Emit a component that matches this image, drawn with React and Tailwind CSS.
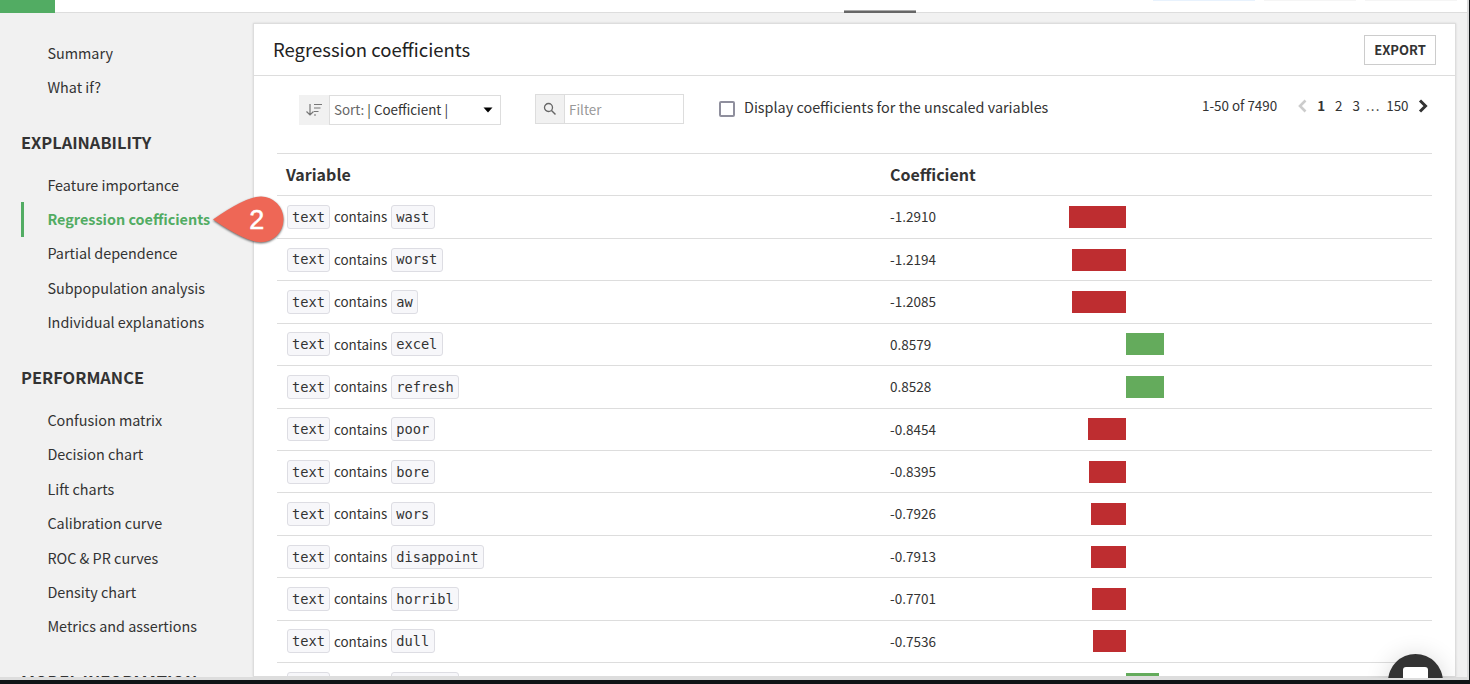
const rows = [
  ["wast", "-1.2910", -1.291],
  ["worst", "-1.2194", -1.2194],
  ["aw", "-1.2085", -1.2085],
  ["excel", "0.8579", 0.8579],
  ["refresh", "0.8528", 0.8528],
  ["poor", "-0.8454", -0.8454],
  ["bore", "-0.8395", -0.8395],
  ["wors", "-0.7926", -0.7926],
  ["disappoint", "-0.7913", -0.7913],
  ["horribl", "-0.7701", -0.7701],
  ["dull", "-0.7536", -0.7536],
  ["perfect", "0.7436", 0.7436],
];

const PX_PER_UNIT = 44.4;

function NavItem({ children, active }) {
  return (
    <div
      className={
        "flex h-[34.45px] shrink-0 items-center pb-[0.6px] pl-[23.4px] text-[14.4px] border-l-[3px] " +
        (active ? "border-[#52ac63] font-bold text-[#52ac63]" : "border-transparent")
      }
    >
      <span className="whitespace-nowrap">{children}</span>
    </div>
  );
}

function NavHeading({ children }) {
  return (
    <div className="flex h-[63px] shrink-0 items-center pt-[11px] text-[16.4px] font-bold">
      {children}
    </div>
  );
}

function Chip({ children }) {
  return (
    <span className="flex h-[24px] items-center rounded-[3px] border border-[#dddde3] bg-[#f7f7fa] px-[4.5px] pt-[1.5px] font-['DejaVu_Sans_Mono',monospace] text-[13.7px]">
      {children}
    </span>
  );
}

function Row({ word, text, value }) {
  const w = Math.abs(value) * PX_PER_UNIT;
  return (
    <div className="flex h-[42.44px] shrink-0 items-center border-b border-[#dddddd] pl-[9px] text-[13.5px]">
      <div className="flex w-[604px] items-center gap-[3.5px] pl-[0.5px]">
        <Chip>text</Chip>
        <span className="text-[13.4px]">contains</span>
        <Chip>{word}</Chip>
      </div>
      <div className="w-[148px]">{text}</div>
      <div className="grid w-[176px] grid-cols-2">
        <div className="flex justify-end">
          {value < 0 && <div className="h-[22px] bg-[#be2d30]" style={{ width: w }} />}
        </div>
        <div>{value > 0 && <div className="h-[22px] bg-[#64ab5c]" style={{ width: w }} />}</div>
      </div>
    </div>
  );
}

export default function App() {
  return (
    <div className="relative flex h-[684px] w-[1470px] flex-col overflow-hidden bg-[#101416] font-['Noto_Sans_CJK_SC',sans-serif] leading-none text-[#333333]">
      <div className="flex h-[680px] w-[1469px] flex-col border-r-2 border-b-[3px] border-[#dddddd] bg-[#f1f1f1]">
        <header className="flex h-[13px] shrink-0 border-b border-[#dddddd] bg-white">
          <div className="h-[13px] w-[55px] bg-[#52ac63]" />
          <div className="ml-[789px] mt-[10px] h-[3px] w-[72px] border-t border-[#aaaaaa] bg-[#666666]" />
          <div className="ml-[237px] h-px w-[102px] bg-[#e8f2fd]" />
          <div className="ml-[9px] h-px w-[92px] bg-[#f5f5f5]" />
          <div className="ml-[9px] h-px w-[92px] bg-[#f5f5f5]" />
        </header>
        <div className="flex min-h-0 flex-1 overflow-hidden">
          <nav className="flex w-[253px] shrink-0 flex-col pl-[21px] pt-[23px]">
            <NavItem>Summary</NavItem>
            <NavItem>What if?</NavItem>
            <NavHeading>EXPLAINABILITY</NavHeading>
            <NavItem>Feature importance</NavItem>
            <NavItem active>Regression coefficients</NavItem>
            <NavItem>Partial dependence</NavItem>
            <NavItem>Subpopulation analysis</NavItem>
            <NavItem>Individual explanations</NavItem>
            <NavHeading>PERFORMANCE</NavHeading>
            <NavItem>Confusion matrix</NavItem>
            <NavItem>Decision chart</NavItem>
            <NavItem>Lift charts</NavItem>
            <NavItem>Calibration curve</NavItem>
            <NavItem>ROC &amp; PR curves</NavItem>
            <NavItem>Density chart</NavItem>
            <NavItem>Metrics and assertions</NavItem>
            <NavHeading>MODEL INFORMATION</NavHeading>
          </nav>
          <main className="mt-[10px] flex w-[1203px] shrink-0 flex-col border border-[#dddddd] bg-white shadow-[0_0_2px_rgba(0,0,0,0.12)]">
            <div className="flex h-[52px] shrink-0 items-center justify-between border-b border-[#dddddd] pl-[19px] pr-[19px]">
              <h1 className="pb-[0.5px] text-[18.5px] text-[#222222]">Regression coefficients</h1>
              <button className="h-[30px] w-[72px] border border-[#cccccc] text-[13px] font-bold">EXPORT</button>
            </div>
            <div className="flex h-[77px] shrink-0 items-start pl-[45px] pr-[26px] pt-[18px] text-[13.4px]">
              <div className="mt-px flex h-[30px]">
                <div className="flex w-[30px] items-center justify-center bg-[#f1f1f1]">
                  <svg width="18" height="16" viewBox="0 0 18 16" fill="none" stroke="#777777" strokeWidth="1.2">
                    <path d="M5 2v10.500M1.500 9.500L5 13l3.500-3.500M9 2.500h8M9 6h6.500M9 9.500h4.500M9 13h2" />
                  </svg>
                </div>
                <div className="flex w-[172px] items-center justify-between border border-[#dddddd] pl-[4px] pr-[7px]">
                  <span className="whitespace-pre"><span className="text-[#666666]">Sort:</span> | Coefficient |</span>
                  <svg width="10" height="6" viewBox="0 0 10 6"><path d="M0.500 0.500h9L5 5.500z" fill="#000000" /></svg>
                </div>
              </div>
              <div className="ml-[34px] flex h-[30px] w-[149px] border border-[#dddddd]">
                <div className="flex w-[29px] items-center justify-center border-r border-[#dddddd] bg-[#f1f1f1]">
                  <svg width="14" height="14" viewBox="0 0 14 14" fill="none" stroke="#666666">
                    <circle cx="5.500" cy="5.500" r="4" strokeWidth="1.300" />
                    <path d="M8.500 8.500L12.500 12.500" strokeWidth="1.500" />
                  </svg>
                </div>
                <span className="flex items-center pl-[4px] pt-px text-[#999999]">Filter</span>
              </div>
              <div className="ml-[35px] mt-[7px] h-[16px] w-[16px] rounded-[2px] border-2 border-[#8f8f9d]" />
              <span className="ml-[9px] mt-[6px] text-[14.4px]">Display coefficients for the unscaled variables</span>
              <div className="ml-auto mt-[5px] flex items-center">
                <span className="mr-[21px]">1-50 of 7490</span>
                <svg className="mr-[10px]" width="9" height="14" viewBox="0 0 9 14" fill="none" stroke="#cccccc" strokeWidth="2.600"><path d="M7.500 1.500L2 7l5.500 5.500" /></svg>
                <span className="mr-[10px] font-bold">1</span>
                <span className="mr-[10px]">2</span>
                <span className="mr-[6px]">3</span>
                <span className="mr-[5.500px] tracking-[1.2px]">...</span>
                <span className="mr-[9.500px]">150</span>
                <svg className="mr-px" width="10" height="14" viewBox="0 0 10 14" fill="none" stroke="#333333" strokeWidth="3"><path d="M2 1.500L7.500 7L2 12.500" /></svg>
              </div>
            </div>
            <div className="mx-[23px] flex min-h-0 flex-1 flex-col overflow-hidden border-t border-[#dddddd]">
              <div className="flex h-[42.4px] shrink-0 items-center border-b border-[#dddddd] pb-px pl-[9px] text-[16px] font-bold">
                <span className="w-[604px]">Variable</span>
                <span>Coefficient</span>
              </div>
              {rows.map(([word, text, value]) => (
                <Row key={word} word={word} text={text} value={value} />
              ))}
            </div>
          </main>
        </div>
      </div>

      <svg className="absolute left-[208px] top-[190px]" width="82" height="60" viewBox="0 0 82 60">
        <path
          className="drop-shadow-[0_1px_1px_rgba(0,0,0,0.6)]"
          d="M5 29.500Q38 6.500 53 6.500A22.800 22.800 0 0 1 75.500 29.500A22.800 22.800 0 0 1 53 52.200Q38 52.200 5 29.500Z"
          fill="#ee6756"
        />
        <text x="48.700" y="39" textAnchor="middle" className="font-['Liberation_Sans'] text-[27px]" fill="#ffffff" stroke="#ffffff" strokeWidth="0.500">2</text>
      </svg>

      <div className="absolute left-[1358px] top-[624px] h-[54px] w-[112px] overflow-hidden">
        <div className="ml-[30px] mt-[30px] flex h-[55px] w-[55px] justify-center rounded-full bg-[#333333] pt-[13px] shadow-[0_2px_24px_rgba(0,0,0,0.16)]">
          <div className="h-[28px] w-[25px] rounded-[3px] bg-white" />
        </div>
      </div>
    </div>
  );
}
